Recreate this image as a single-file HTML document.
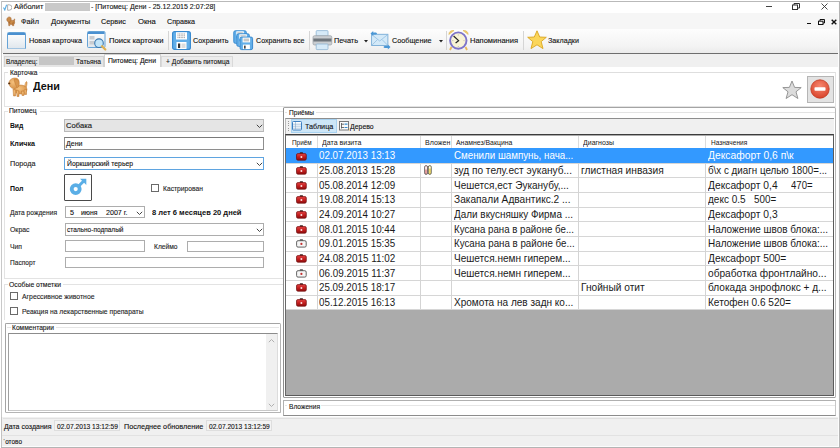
<!DOCTYPE html>
<html><head><meta charset="utf-8">
<style>
*{margin:0;padding:0;box-sizing:border-box}
html,body{width:840px;height:448px;overflow:hidden;background:#f0f0f0;font-family:"Liberation Sans",sans-serif;color:#000;position:relative}
.a{position:absolute}
.t{position:absolute;white-space:pre;transform-origin:0 0}
.s{-webkit-text-stroke:0.12px currentColor}
</style></head><body>
<div class="a" style="left:0px;top:0px;width:840px;height:448px;background:#fff"></div>
<div class="a" style="left:1px;top:1px;width:838px;height:13px;background:#fff"></div>
<div class="a" style="left:1px;top:1px;width:838px;height:1px;background:#b9b9b9"></div>
<div class="a" style="left:1px;top:1px;width:1px;height:446px;background:#c2c2c2"></div>
<div class="a" style="left:839px;top:1px;width:1px;height:447px;background:#b4b4b4"></div>
<div class="a" style="left:1px;top:447px;width:839px;height:1px;background:#b4b4b4"></div>
<svg class="a" style="left:3px;top:3.5px" width="9" height="7" viewBox="0 0 9 7"><path d="M0.5 3.5 L1.8 6 L3.6 0.8" stroke="#5aaee6" stroke-width="1.1" fill="none"/><path d="M4.6 0.8 h1.6 a2.7 2.7 0 0 1 0 5.4 h-1.6 z" stroke="#a8a8a8" stroke-width="0.9" fill="none"/></svg>
<div class="t s" style="left:14.3px;top:3.45px;font-size:7.5px;line-height:7.5px;color:#161616;transform:scaleX(0.9932);">Айболит</div>
<div class="a" style="left:45px;top:3px;width:45px;height:8px;background:#c9c9c9"></div>
<div class="t s" style="left:90.7px;top:3.45px;font-size:7.5px;line-height:7.5px;color:#161616;transform:scaleX(0.9378);">- [Питомец: Дени - 25.12.2015 2:07:28]</div>
<div class="a" style="left:765.5px;top:6px;width:6.5px;height:1px;background:#444"></div>
<svg class="a" style="left:792px;top:3px" width="8" height="7" viewBox="0 0 8 7"><rect x="0.5" y="2" width="5" height="4.5" fill="none" stroke="#333" stroke-width="1"/><path d="M2 2 V0.5 H7.5 V5 H6" fill="none" stroke="#333" stroke-width="1"/></svg>
<svg class="a" style="left:821px;top:3px" width="7" height="7" viewBox="0 0 7 7"><path d="M0.5 0.5 L6.5 6.5 M6.5 0.5 L0.5 6.5" stroke="#333" stroke-width="0.9"/></svg>
<div class="a" style="left:2px;top:13.4px;width:837px;height:15.5px;background:#f6f6f6"></div>
<svg class="a" style="left:4.5px;top:15.5px" width="11" height="11" viewBox="0 0 11 11"><g transform="scale(0.44)"><g fill="#c98a48" stroke="#9a5a25" stroke-width="1"><path d="M19.5 12 C20 9 20.5 7 21.5 6.5 C22.5 7 22 10 21 13 Z"/><ellipse cx="15.5" cy="14.5" rx="6.5" ry="5"/><path d="M8 14 L8.5 22 L11 22 L11 15 Z"/><path d="M16.5 16 L17 22 L20 22 L20.5 15 Z"/><path d="M4 8 C4 5 7 2 10 2 C13 2 14.5 5 14 8 C13.5 12 11 14 8 13.5 C6 13 4 11 4 8 Z"/></g></g></svg>
<div class="t s" style="left:21.4px;top:17.65px;font-size:7.5px;line-height:7.5px;color:#111;transform:scaleX(0.9700);">Файл</div>
<div class="t s" style="left:50.7px;top:17.65px;font-size:7.5px;line-height:7.5px;color:#111;transform:scaleX(1.0162);">Документы</div>
<div class="t s" style="left:101.4px;top:17.65px;font-size:7.5px;line-height:7.5px;color:#111;transform:scaleX(0.9655);">Сервис</div>
<div class="t s" style="left:137.6px;top:17.65px;font-size:7.5px;line-height:7.5px;color:#111;transform:scaleX(1.0265);">Окна</div>
<div class="t s" style="left:166.7px;top:17.65px;font-size:7.5px;line-height:7.5px;color:#111;transform:scaleX(0.9551);">Справка</div>
<div class="a" style="left:807px;top:22.5px;width:4px;height:1.5px;background:#111"></div>
<svg class="a" style="left:818px;top:18.5px" width="7" height="6" viewBox="0 0 7 6"><rect x="0.5" y="2.2" width="4.5" height="3.3" fill="none" stroke="#111" stroke-width="1"/><path d="M2 2 V0.5 H6.5 V4 H5" fill="none" stroke="#111" stroke-width="1"/></svg>
<svg class="a" style="left:831px;top:19px" width="6" height="6" viewBox="0 0 6 6"><path d="M0.7 0.7 L5.3 5.3 M5.3 0.7 L0.7 5.3" stroke="#111" stroke-width="1.4"/></svg>
<div class="a" style="left:2px;top:28.9px;width:837px;height:24.3px;background:linear-gradient(#fdfdfd,#f4f4f4 70%,#ebebeb)"></div>
<div class="a" style="left:3px;top:53px;width:836px;height:1.2px;background:#6e6e6e"></div>
<svg class="a" style="left:7px;top:31.5px" width="19" height="17.5" viewBox="0 0 19 17.5"><defs><linearGradient id="g1" x1="0" y1="0" x2="0" y2="1"><stop offset="0" stop-color="#ffffff"/><stop offset="1" stop-color="#dfe6ec"/></linearGradient></defs><rect x="0.5" y="0.5" width="18" height="16.5" rx="1" fill="url(#g1)" stroke="#66a3d6" stroke-width="1"/><rect x="1" y="1" width="17" height="2" fill="#4a90d0"/></svg>
<div class="t s" style="left:29px;top:36.95px;font-size:7.5px;line-height:7.5px;color:#111;transform:scaleX(0.9758);">Новая карточка</div>
<svg class="a" style="left:87px;top:30.5px" width="19.5" height="20" viewBox="0 0 19.5 20"><defs><linearGradient id="g2" x1="0" y1="0" x2="0" y2="1"><stop offset="0" stop-color="#ffffff"/><stop offset="1" stop-color="#dfe6ec"/></linearGradient></defs><rect x="0.5" y="0.5" width="17.5" height="16" rx="1" fill="url(#g2)" stroke="#66a3d6" stroke-width="1"/><rect x="1" y="1" width="16.5" height="2" fill="#4a90d0"/><rect x="2.5" y="5" width="5" height="3.5" fill="#c9ccd0"/><rect x="2.5" y="10" width="5" height="3.5" fill="#c9ccd0"/><circle cx="12" cy="12.2" r="4.3" fill="#c2e4f8" stroke="#3a78b0" stroke-width="1.1"/><path d="M15 15.2 L18.3 18.5" stroke="#e0b050" stroke-width="2.2" stroke-linecap="round"/></svg>
<div class="t s" style="left:108.5px;top:36.95px;font-size:7.5px;line-height:7.5px;color:#111;transform:scaleX(1.0238);">Поиск карточки</div>
<div class="a" style="left:167.5px;top:31px;width:1px;height:19px;background:#d5d5d5"></div>
<svg class="a" style="left:172px;top:31px" width="19" height="19" viewBox="0 0 19 19"><rect x="0.6" y="0.6" width="17.8" height="17.8" rx="2" fill="#62aee8" stroke="#3a8bd0" stroke-width="1.2"/><rect x="4" y="1.2" width="11" height="7.3" fill="#fff"/><path d="M5.5 3h8M5.5 4.8h8M5.5 6.6h8" stroke="#555" stroke-width="0.6" stroke-dasharray="1 0.6"/><rect x="4.5" y="11" width="10" height="7" fill="#fff"/><rect x="6" y="12.5" width="2.2" height="4.5" fill="#333"/><rect x="9.5" y="12.5" width="4" height="4.5" fill="#ddd"/></svg>
<div class="t s" style="left:193px;top:36.95px;font-size:7.5px;line-height:7.5px;color:#111;transform:scaleX(0.9549);">Сохранить</div>
<svg class="a" style="left:233px;top:30px" width="21" height="21" viewBox="0 0 21 21"><g transform="translate(0.3 0.3)"><rect x="0.5" y="0.5" width="12.5" height="12.5" rx="1.5" fill="#62aee8" stroke="#3a8bd0" stroke-width="1"/><rect x="3" y="1" width="7.5" height="4.8" fill="#fff"/><path d="M4 2.6h5.5M4 4.2h5.5" stroke="#666" stroke-width="0.5"/><rect x="3.3" y="8" width="7" height="4.5" fill="#fff"/><rect x="4.5" y="9" width="1.5" height="3" fill="#333"/></g><g transform="translate(3.3 3.3)"><rect x="0.5" y="0.5" width="12.5" height="12.5" rx="1.5" fill="#62aee8" stroke="#3a8bd0" stroke-width="1"/><rect x="3" y="1" width="7.5" height="4.8" fill="#fff"/><path d="M4 2.6h5.5M4 4.2h5.5" stroke="#666" stroke-width="0.5"/><rect x="3.3" y="8" width="7" height="4.5" fill="#fff"/><rect x="4.5" y="9" width="1.5" height="3" fill="#333"/></g><g transform="translate(6.6 6.6)"><rect x="0.5" y="0.5" width="12.5" height="12.5" rx="1.5" fill="#62aee8" stroke="#3a8bd0" stroke-width="1"/><rect x="3" y="1" width="7.5" height="4.8" fill="#fff"/><path d="M4 2.6h5.5M4 4.2h5.5" stroke="#666" stroke-width="0.5"/><rect x="3.3" y="8" width="7" height="4.5" fill="#fff"/><rect x="4.5" y="9" width="1.5" height="3" fill="#333"/></g></svg>
<div class="t s" style="left:255.5px;top:36.95px;font-size:7.5px;line-height:7.5px;color:#111;transform:scaleX(0.9475);">Сохранить все</div>
<div class="a" style="left:308.8px;top:31px;width:1px;height:19px;background:#d5d5d5"></div>
<svg class="a" style="left:312px;top:30px" width="21" height="21" viewBox="0 0 21 21"><rect x="4.2" y="0.6" width="11.8" height="5.5" rx="0.8" fill="#d6eaf8" stroke="#8fb5d3" stroke-width="0.8"/><rect x="1" y="5.7" width="18.8" height="9.3" rx="1.5" fill="#c9cdd1" stroke="#9a9fa5" stroke-width="0.7"/><rect x="1.4" y="8.5" width="18" height="3" fill="#6f767d"/><rect x="4.2" y="14" width="11.8" height="5.6" rx="0.8" fill="#d6eaf8" stroke="#8fb5d3" stroke-width="0.8"/></svg>
<div class="t s" style="left:334px;top:36.95px;font-size:7.5px;line-height:7.5px;color:#111;transform:scaleX(0.9765);">Печать</div>
<svg class="a" style="left:363.5px;top:39.5px" width="4" height="3" viewBox="0 0 4 3"><path d="M0 0 H4 L2 2.5 Z" fill="#222"/></svg>
<svg class="a" style="left:370px;top:29.5px" width="21" height="21" viewBox="0 0 21 21"><rect x="1.6" y="4.3" width="16.3" height="11.2" fill="#d3e9f8" stroke="#78acd6" stroke-width="0.9"/><path d="M1.8 4.6 L9.7 11 L17.7 4.6 M1.8 15.3 L7.5 9.5 M17.7 15.3 L12 9.5" stroke="#8bb9de" fill="none" stroke-width="0.7"/><path d="M0.5 3.5 L3.2 1 V2.5 H6 L7.2 3.5 L6 4.5 H3.2 V6 Z" fill="#4a97d6"/><path d="M20.5 17 L17.8 14.5 V16 H14.5 L13.3 17 L14.5 18 H17.8 V19.5 Z" fill="#4a97d6"/></svg>
<div class="t s" style="left:392px;top:36.95px;font-size:7.5px;line-height:7.5px;color:#111;transform:scaleX(0.9675);">Сообщение</div>
<svg class="a" style="left:438.5px;top:39.5px" width="4" height="3" viewBox="0 0 4 3"><path d="M0 0 H4 L2 2.5 Z" fill="#222"/></svg>
<div class="a" style="left:445.5px;top:31px;width:1px;height:19px;background:#d5d5d5"></div>
<svg class="a" style="left:448px;top:29.5px" width="21" height="21" viewBox="0 0 21 21"><path d="M0.8 4.5 A4 4 0 0 1 6 0.6 Z" fill="#f2cf6e" stroke="#d9ab3e" stroke-width="0.5"/><path d="M20.2 4.5 A4 4 0 0 0 15 0.6 Z" fill="#f2cf6e" stroke="#d9ab3e" stroke-width="0.5"/><path d="M3.5 17 L2 20 M17.5 17 L19 20" stroke="#e8b85a" stroke-width="1.8"/><circle cx="10.3" cy="10.6" r="8.2" fill="#f8f3d6" stroke="#7d74c9" stroke-width="1.9"/><path d="M10.3 4.5v1M10.3 16v1M4.3 10.6h1M15.5 10.6h1" stroke="#999" stroke-width="0.6"/><path d="M5.6 6 L10.6 10.6 L7.6 13" stroke="#222" stroke-width="1.2" fill="none"/></svg>
<div class="t s" style="left:470px;top:36.95px;font-size:7.5px;line-height:7.5px;color:#111;transform:scaleX(1.0026);">Напоминания</div>
<div class="a" style="left:523.2px;top:31px;width:1px;height:19px;background:#d5d5d5"></div>
<svg class="a" style="left:526.5px;top:30px" width="20" height="20" viewBox="0 0 20 20"><path d="M10 0.8 L12.7 7 L19.3 7.3 L14.2 11.6 L16 18.6 L10 14.8 L4 18.6 L5.8 11.6 L0.7 7.3 L7.3 7 Z" fill="#fbd65a" stroke="#d9a520" stroke-width="0.9" stroke-linejoin="round"/></svg>
<div class="t s" style="left:548px;top:36.95px;font-size:7.5px;line-height:7.5px;color:#111;transform:scaleX(0.9548);">Закладки</div>
<div class="a" style="left:3px;top:54px;width:836px;height:13px;background:#f0f0f0"></div>
<div class="a" style="left:3px;top:66.5px;width:836px;height:1px;background:#dadada"></div>
<div class="a" style="left:4px;top:56px;width:99.5px;height:11px;background:#e6e6e6;border:1px solid #d2d2d2;border-bottom:none"></div>
<div class="t s" style="left:6px;top:57.85px;font-size:7.5px;line-height:7.5px;color:#161616;transform:scaleX(0.8564);">Владелец:</div>
<div class="a" style="left:38.6px;top:57.2px;width:35.4px;height:7.4px;background:#c6c6c6"></div>
<div class="t s" style="left:75.5px;top:57.85px;font-size:7.5px;line-height:7.5px;color:#161616;transform:scaleX(0.8939);">Татьяна</div>
<div class="a" style="left:104px;top:54px;width:57px;height:14px;background:#fff;border:1px solid #d2d2d2;border-bottom:none"></div>
<div class="a" style="left:105px;top:66px;width:55px;height:2px;background:#fff"></div>
<div class="t s" style="left:108px;top:57.25px;font-size:7.5px;line-height:7.5px;color:#111;transform:scaleX(0.9146);">Питомец: Дени</div>
<div class="a" style="left:161px;top:56px;width:71.5px;height:11px;background:#ececec;border:1px solid #d9d9d9;border-bottom:none"></div>
<div class="t s" style="left:165.5px;top:57.85px;font-size:7.5px;line-height:7.5px;color:#161616;transform:scaleX(0.8932);">+ Добавить питомца</div>
<div class="a" style="left:1.5px;top:67px;width:837px;height:350px;background:#fff"></div>
<div class="a" style="left:1.3px;top:54px;width:1px;height:363px;background:#c8c8c8"></div>
<div class="a" style="left:3.7px;top:71.5px;width:832.6px;height:35px;border:1px solid #e3e3e3;border-top-color:#dedede"></div>
<div class="a" style="left:8px;top:68px;width:31px;height:6px;background:#fff"></div>
<div class="t s" style="left:9.5px;top:69.15px;font-size:7.5px;line-height:7.5px;color:#161616;transform:scaleX(0.8748);">Карточка</div>
<svg class="a" style="left:5px;top:75px" width="25" height="25" viewBox="0 0 25 25"><defs><radialGradient id="dg" cx="0.4" cy="0.4" r="0.7"><stop offset="0" stop-color="#f5c17e"/><stop offset="1" stop-color="#d48f45"/></radialGradient></defs><g fill="url(#dg)" stroke="#c07a35" stroke-width="0.5"><path d="M19.5 12 C20 9 20.5 7 21.5 6.5 C22.5 7 22 10 21 13 Z"/><ellipse cx="15.5" cy="14.5" rx="6.5" ry="4.5"/><path d="M8 14 L8.5 21 L10.5 21 L11 15 Z"/><path d="M11.5 15 L12 21.5 L14 21.5 L14 16 Z"/><path d="M16.5 16 L17 20.5 L19 20.5 L19.5 16 Z"/><path d="M19 15 L19.5 19.5 L21.5 19.5 L21.5 14 Z"/><path d="M4 8 C4 5 7 3 10 3 C13 3 14.5 5 14 8 C13.5 12 11 14 8 13.5 C6 13 4 11 4 8 Z"/><path d="M9 4.5 C11.5 3.5 13.5 5 14 7 C14.5 10 13.5 12.5 12.5 12.5 C11 11.5 10 8 9 4.5 Z" fill="#d9974f"/></g><ellipse cx="4.2" cy="8.4" rx="1.1" ry="0.9" fill="#5a3010"/></svg>
<div class="t" style="left:33px;top:80.51px;font-size:10.5px;line-height:10.5px;color:#111;font-weight:bold;transform:scaleX(1.0286);">Дени</div>
<svg class="a" style="left:782px;top:79.5px" width="20" height="20" viewBox="0 0 20 20"><path d="M10 1 L12.6 7.4 L19.2 7.6 L14 11.8 L15.9 18.5 L10 14.7 L4.1 18.5 L6 11.8 L0.8 7.6 L7.4 7.4 Z" fill="#dcdcdc" stroke="#8c8c8c" stroke-width="0.9" stroke-linejoin="round"/></svg>
<div class="a" style="left:807px;top:76px;width:27px;height:27px;background:#e3e3e3;border:1px solid #b5b5b5"></div>
<svg class="a" style="left:810.3px;top:78.6px" width="20" height="20" viewBox="0 0 20 20"><defs><radialGradient id="rg" cx="0.5" cy="0.35" r="0.65"><stop offset="0" stop-color="#f7876f"/><stop offset="1" stop-color="#d8442c"/></radialGradient></defs><circle cx="10" cy="10" r="9.2" fill="url(#rg)" stroke="#c23a22" stroke-width="0.8"/><rect x="4.5" y="8.3" width="11" height="3.4" rx="0.8" fill="#fff"/></svg>
<div class="a" style="left:3.7px;top:111px;width:279px;height:168px;border:1px solid #e3e3e3;border-right:none"></div>
<div class="a" style="left:8px;top:108px;width:32px;height:6px;background:#fff"></div>
<div class="t s" style="left:9.4px;top:107.25px;font-size:7.5px;line-height:7.5px;color:#161616;transform:scaleX(0.8980);">Питомец</div>
<div class="t" style="left:10.2px;top:121.95px;font-size:7.5px;line-height:7.5px;color:#111;font-weight:bold;transform:scaleX(0.8988);">Вид</div>
<div class="a" style="left:64px;top:118.7px;width:200px;height:13.3px;background:#e5e5e5;border:1px solid #b9b9b9"></div>
<div class="t s" style="left:66.3px;top:121.95px;font-size:7.5px;line-height:7.5px;color:#161616;transform:scaleX(1.0196);">Собака</div>
<svg class="a" style="left:255.5px;top:123.5px" width="7" height="5" viewBox="0 0 7 5"><path d="M0.8 0.8 L3.5 3.5 L6.2 0.8" stroke="#444" stroke-width="1" fill="none"/></svg>
<div class="t" style="left:10.2px;top:140.15px;font-size:7.5px;line-height:7.5px;color:#111;font-weight:bold;transform:scaleX(0.9529);">Кличка</div>
<div class="a" style="left:64px;top:137px;width:200px;height:13px;background:#fff;border:1px solid #8e8e8e;border-top-color:#7a7a7a"></div>
<div class="t s" style="left:66.3px;top:140.15px;font-size:7.5px;line-height:7.5px;color:#161616;transform:scaleX(0.9378);">Дени</div>
<div class="t s" style="left:10px;top:159.95px;font-size:7.5px;line-height:7.5px;color:#1e1e1e;transform:scaleX(0.9697);">Порода</div>
<div class="a" style="left:64px;top:157.3px;width:200px;height:12.5px;background:#fff;border:1px solid #5fa4e0"></div>
<div class="t s" style="left:66.5px;top:159.95px;font-size:7.5px;line-height:7.5px;color:#111;transform:scaleX(0.9060);">Йоркширский терьер</div>
<svg class="a" style="left:255.5px;top:162px" width="7" height="5" viewBox="0 0 7 5"><path d="M0.8 0.8 L3.5 3.5 L6.2 0.8" stroke="#444" stroke-width="1" fill="none"/></svg>
<div class="t" style="left:10.3px;top:184.65px;font-size:7.5px;line-height:7.5px;color:#111;font-weight:bold;transform:scaleX(0.9270);">Пол</div>
<div class="a" style="left:64.4px;top:174.3px;width:27.3px;height:26.6px;background:#fff;border:1px solid #4a4a4a;border-radius:1px"></div>
<svg class="a" style="left:68px;top:177px" width="21" height="21" viewBox="0 0 21 21"><circle cx="7.7" cy="12.1" r="4" fill="none" stroke="#5aaee6" stroke-width="3.8"/><path d="M10.8 9 L15.5 4.3" stroke="#5aaee6" stroke-width="3"/><path d="M12 1.8 H18.3 V8.1 Z" fill="#5aaee6"/></svg>
<div class="a" style="left:151px;top:184.1px;width:8.2px;height:8px;background:#fff;border:1px solid #6a6a6a"></div>
<div class="t s" style="left:163px;top:184.65px;font-size:7.5px;line-height:7.5px;color:#1e1e1e;transform:scaleX(0.8957);">Кастрирован</div>
<div class="t s" style="left:10px;top:208.95px;font-size:7.5px;line-height:7.5px;color:#1e1e1e;transform:scaleX(0.8881);">Дата рождения</div>
<div class="a" style="left:64.5px;top:205.8px;width:80px;height:12.6px;background:#fff;border:1px solid #adadad"></div>
<div class="t s" style="left:69.5px;top:208.95px;font-size:7.5px;line-height:7.5px;color:#111;transform:scaleX(0.9588);">5</div>
<div class="t s" style="left:81px;top:208.95px;font-size:7.5px;line-height:7.5px;color:#111;transform:scaleX(0.9151);">июня</div>
<div class="t s" style="left:105.5px;top:208.95px;font-size:7.5px;line-height:7.5px;color:#111;transform:scaleX(0.9477);">2007 г.</div>
<svg class="a" style="left:135.5px;top:210.5px" width="7" height="5" viewBox="0 0 7 5"><path d="M0.8 0.8 L3.5 3.5 L6.2 0.8" stroke="#444" stroke-width="1" fill="none"/></svg>
<div class="t" style="left:151.5px;top:208.95px;font-size:7.5px;line-height:7.5px;color:#111;font-weight:bold;transform:scaleX(1.0039);">8 лет 6 месяцев 20 дней</div>
<div class="t s" style="left:10px;top:226.15px;font-size:7.5px;line-height:7.5px;color:#1e1e1e;transform:scaleX(0.9190);">Окрас</div>
<div class="a" style="left:64.5px;top:223px;width:199px;height:13px;background:#fff;border:1px solid #adadad"></div>
<div class="t s" style="left:66.5px;top:225.95px;font-size:7.5px;line-height:7.5px;color:#111;transform:scaleX(0.8692);">стально-подпалый</div>
<svg class="a" style="left:255.5px;top:228px" width="7" height="5" viewBox="0 0 7 5"><path d="M0.8 0.8 L3.5 3.5 L6.2 0.8" stroke="#444" stroke-width="1" fill="none"/></svg>
<div class="t s" style="left:10px;top:243.15px;font-size:7.5px;line-height:7.5px;color:#1e1e1e;transform:scaleX(0.9057);">Чип</div>
<div class="a" style="left:64.5px;top:240.3px;width:80px;height:11.8px;background:#fff;border:1px solid #adadad"></div>
<div class="t s" style="left:154px;top:243.15px;font-size:7.5px;line-height:7.5px;color:#1e1e1e;transform:scaleX(0.8889);">Клеймо</div>
<div class="a" style="left:187px;top:240.5px;width:76.7px;height:11.6px;background:#fff;border:1px solid #adadad"></div>
<div class="t s" style="left:10px;top:258.95px;font-size:7.5px;line-height:7.5px;color:#1e1e1e;transform:scaleX(0.8793);">Паспорт</div>
<div class="a" style="left:64.5px;top:256.5px;width:199.2px;height:11.6px;background:#fff;border:1px solid #adadad"></div>
<div class="a" style="left:3.7px;top:284px;width:279px;height:36px;border:1px solid #e3e3e3;border-right:none;border-bottom:none"></div>
<div class="a" style="left:8px;top:281px;width:55px;height:6px;background:#fff"></div>
<div class="t s" style="left:9px;top:280.95px;font-size:7.5px;line-height:7.5px;color:#161616;transform:scaleX(0.9088);">Особые отметки</div>
<div class="a" style="left:9.7px;top:292.3px;width:8.2px;height:8px;background:#fff;border:1px solid #6a6a6a"></div>
<div class="t s" style="left:21.5px;top:292.95px;font-size:7.5px;line-height:7.5px;color:#1e1e1e;transform:scaleX(0.9136);">Агрессивное животное</div>
<div class="a" style="left:9.7px;top:307.2px;width:8.2px;height:8px;background:#fff;border:1px solid #6a6a6a"></div>
<div class="t s" style="left:21.5px;top:307.95px;font-size:7.5px;line-height:7.5px;color:#1e1e1e;transform:scaleX(0.9035);">Реакция на лекарственные препараты</div>
<div class="a" style="left:5.4px;top:322.7px;width:275.2px;height:90px;border:1px solid #a4a4a4;border-right-color:#b4b4b4;border-bottom-color:#b4b4b4;border-radius:1.5px"></div>
<div class="a" style="left:7px;top:327px;width:272px;height:1px;background:#e6e6e6"></div>
<div class="a" style="left:11px;top:324px;width:45px;height:6px;background:#fff"></div>
<div class="t s" style="left:12px;top:323.85px;font-size:7.5px;line-height:7.5px;color:#161616;transform:scaleX(0.8889);">Комментарии</div>
<div class="a" style="left:8.3px;top:333.2px;width:270px;height:78px;background:#fff;border:1px solid #8c8c8c;border-left-color:#a0a0a0;border-right-color:#dcdcdc;border-bottom-color:#c8c8c8"></div>
<div class="a" style="left:266px;top:334px;width:11px;height:76px;background:#f0f0f0"></div>
<svg class="a" style="left:268px;top:338px" width="7" height="5" viewBox="0 0 7 5"><path d="M0.8 4.2 L3.5 1.5 L6.2 4.2" stroke="#b0b0b0" stroke-width="1" fill="none"/></svg>
<svg class="a" style="left:268px;top:403px" width="7" height="5" viewBox="0 0 7 5"><path d="M0.8 0.8 L3.5 3.5 L6.2 0.8" stroke="#b0b0b0" stroke-width="1" fill="none"/></svg>
<div class="a" style="left:283px;top:107.4px;width:553px;height:290.6px;border:1px solid #a4a4a4;border-left-color:#8c8c8c;border-right-color:#b8b8b8;border-bottom-color:#a0a0a0;border-radius:1.5px"></div>
<div class="a" style="left:284.5px;top:111.5px;width:550px;height:286px;border-top:1px solid #e3e3e3"></div>
<div class="a" style="left:287px;top:108.5px;width:29px;height:6px;background:#fff"></div>
<div class="t s" style="left:289px;top:109.15px;font-size:7.5px;line-height:7.5px;color:#161616;transform:scaleX(0.8777);">Приёмы</div>
<div class="a" style="left:285px;top:117.8px;width:548.5px;height:16.7px;background:#f0f0f0;border-left:1px solid #b8b8b8;border-top:1px solid #8e8e8e"></div>
<div class="a" style="left:288.3px;top:120.5px;width:1px;height:1px;background:#9a9a9a"></div>
<div class="a" style="left:288.3px;top:122.9px;width:1px;height:1px;background:#9a9a9a"></div>
<div class="a" style="left:288.3px;top:125.3px;width:1px;height:1px;background:#9a9a9a"></div>
<div class="a" style="left:288.3px;top:127.7px;width:1px;height:1px;background:#9a9a9a"></div>
<div class="a" style="left:288.3px;top:130.1px;width:1px;height:1px;background:#9a9a9a"></div>
<div class="a" style="left:291px;top:119px;width:46.2px;height:13.8px;background:#cde6f7;border:1px solid #a8d2f0"></div>
<svg class="a" style="left:292.3px;top:121.3px" width="10" height="9.5" viewBox="0 0 10 9.5"><rect x="0.5" y="0.5" width="9" height="8.5" rx="0.8" fill="#fbfdff" stroke="#3d7fc0" stroke-width="1"/><path d="M1 3.2h8M1 5.2h8M1 7.2h8M3.5 1v7.5" stroke="#7fa6c8" stroke-width="0.6"/></svg>
<div class="t s" style="left:304.7px;top:122.73px;font-size:8px;line-height:8px;color:#111;transform:scaleX(0.9020);">Таблица</div>
<svg class="a" style="left:338.5px;top:121.3px" width="10" height="9.5" viewBox="0 0 10 9.5"><rect x="0.5" y="0.5" width="9" height="8.5" fill="#fbfbfb" stroke="#6c6c6c" stroke-width="0.9"/><path d="M2.5 2v5.5M2.5 3.2h2.5M2.5 6.5h2.5" stroke="#333" stroke-width="0.7"/><path d="M5.5 3.2h3M5.5 6.5h3" stroke="#3a8fd0" stroke-width="1.2"/></svg>
<div class="t s" style="left:350px;top:122.73px;font-size:8px;line-height:8px;color:#111;transform:scaleX(0.8658);">Дерево</div>
<div class="a" style="left:285px;top:134.2px;width:548.5px;height:261.8px;background:#ababab;border:1px solid #5a5a5a;border-top:1.6px solid #3c3c3c;border-left-color:#6a6a6a"></div>
<div class="a" style="left:286px;top:135.8px;width:546.6px;height:12.4px;background:#fff"></div>
<div class="a" style="left:316.6px;top:135.8px;width:1px;height:12.4px;background:#dcdcdc"></div>
<div class="a" style="left:420px;top:135.8px;width:1px;height:12.4px;background:#dcdcdc"></div>
<div class="a" style="left:450.9px;top:135.8px;width:1px;height:12.4px;background:#dcdcdc"></div>
<div class="a" style="left:578px;top:135.8px;width:1px;height:12.4px;background:#dcdcdc"></div>
<div class="a" style="left:705.2px;top:135.8px;width:1px;height:12.4px;background:#dcdcdc"></div>
<div class="t" style="left:291.9px;top:138.74px;font-size:7.4px;line-height:7.4px;color:#161616;transform:scaleX(0.8659);/*nostroke*/">Приём</div>
<div class="t" style="left:321.6px;top:138.74px;font-size:7.4px;line-height:7.4px;color:#161616;transform:scaleX(0.9491);/*nostroke*/">Дата визита</div>
<div class="t" style="left:424.7px;top:138.74px;font-size:7.4px;line-height:7.4px;color:#161616;transform:scaleX(0.9547);/*nostroke*/">Вложен</div>
<div class="t" style="left:455.7px;top:138.74px;font-size:7.4px;line-height:7.4px;color:#161616;transform:scaleX(0.9322);/*nostroke*/">Анамнез/Вакцина</div>
<div class="t" style="left:583.3px;top:138.74px;font-size:7.4px;line-height:7.4px;color:#161616;transform:scaleX(0.9466);/*nostroke*/">Диагнозы</div>
<div class="t" style="left:710.7px;top:138.74px;font-size:7.4px;line-height:7.4px;color:#161616;transform:scaleX(0.8836);/*nostroke*/">Назначения</div>
<svg width="0" height="0" style="position:absolute"><defs><linearGradient id="mk" x1="0" y1="0" x2="0" y2="1"><stop offset="0" stop-color="#e54545"/><stop offset="0.5" stop-color="#c41e1e"/><stop offset="1" stop-color="#8e0e0e"/></linearGradient></defs></svg>
<div class="a" style="left:286px;top:148.2px;width:546.8px;height:14.64px;background:#3399ff"></div>
<div class="a" style="left:286px;top:162.83999999999997px;width:546.8px;height:14.64px;background:#fff"></div>
<div class="a" style="left:286px;top:177.48px;width:546.8px;height:14.64px;background:#fff"></div>
<div class="a" style="left:286px;top:192.12px;width:546.8px;height:14.64px;background:#fff"></div>
<div class="a" style="left:286px;top:206.76px;width:546.8px;height:14.64px;background:#fff"></div>
<div class="a" style="left:286px;top:221.39999999999998px;width:546.8px;height:14.64px;background:#fff"></div>
<div class="a" style="left:286px;top:236.04px;width:546.8px;height:14.64px;background:#fff"></div>
<div class="a" style="left:286px;top:250.68px;width:546.8px;height:14.64px;background:#fff"></div>
<div class="a" style="left:286px;top:265.32px;width:546.8px;height:14.64px;background:#fff"></div>
<div class="a" style="left:286px;top:279.96px;width:546.8px;height:14.64px;background:#fff"></div>
<div class="a" style="left:286px;top:294.6px;width:546.8px;height:14.64px;background:#fff"></div>
<div class="a" style="left:286px;top:163px;width:546.8px;height:1px;background:#d6d6d6"></div>
<div class="a" style="left:286px;top:177px;width:546.8px;height:1px;background:#d6d6d6"></div>
<div class="a" style="left:316.6px;top:162.83999999999997px;width:1px;height:14.64px;background:#d4d4d4"></div>
<div class="a" style="left:420px;top:162.83999999999997px;width:1px;height:14.64px;background:#d4d4d4"></div>
<div class="a" style="left:450.9px;top:162.83999999999997px;width:1px;height:14.64px;background:#d4d4d4"></div>
<div class="a" style="left:578px;top:162.83999999999997px;width:1px;height:14.64px;background:#d4d4d4"></div>
<div class="a" style="left:705.2px;top:162.83999999999997px;width:1px;height:14.64px;background:#d4d4d4"></div>
<div class="a" style="left:286px;top:192px;width:546.8px;height:1px;background:#d6d6d6"></div>
<div class="a" style="left:316.6px;top:177.48px;width:1px;height:14.64px;background:#d4d4d4"></div>
<div class="a" style="left:420px;top:177.48px;width:1px;height:14.64px;background:#d4d4d4"></div>
<div class="a" style="left:450.9px;top:177.48px;width:1px;height:14.64px;background:#d4d4d4"></div>
<div class="a" style="left:578px;top:177.48px;width:1px;height:14.64px;background:#d4d4d4"></div>
<div class="a" style="left:705.2px;top:177.48px;width:1px;height:14.64px;background:#d4d4d4"></div>
<div class="a" style="left:286px;top:207px;width:546.8px;height:1px;background:#d6d6d6"></div>
<div class="a" style="left:316.6px;top:192.12px;width:1px;height:14.64px;background:#d4d4d4"></div>
<div class="a" style="left:420px;top:192.12px;width:1px;height:14.64px;background:#d4d4d4"></div>
<div class="a" style="left:450.9px;top:192.12px;width:1px;height:14.64px;background:#d4d4d4"></div>
<div class="a" style="left:578px;top:192.12px;width:1px;height:14.64px;background:#d4d4d4"></div>
<div class="a" style="left:705.2px;top:192.12px;width:1px;height:14.64px;background:#d4d4d4"></div>
<div class="a" style="left:286px;top:221px;width:546.8px;height:1px;background:#d6d6d6"></div>
<div class="a" style="left:316.6px;top:206.76px;width:1px;height:14.64px;background:#d4d4d4"></div>
<div class="a" style="left:420px;top:206.76px;width:1px;height:14.64px;background:#d4d4d4"></div>
<div class="a" style="left:450.9px;top:206.76px;width:1px;height:14.64px;background:#d4d4d4"></div>
<div class="a" style="left:578px;top:206.76px;width:1px;height:14.64px;background:#d4d4d4"></div>
<div class="a" style="left:705.2px;top:206.76px;width:1px;height:14.64px;background:#d4d4d4"></div>
<div class="a" style="left:286px;top:236px;width:546.8px;height:1px;background:#d6d6d6"></div>
<div class="a" style="left:316.6px;top:221.39999999999998px;width:1px;height:14.64px;background:#d4d4d4"></div>
<div class="a" style="left:420px;top:221.39999999999998px;width:1px;height:14.64px;background:#d4d4d4"></div>
<div class="a" style="left:450.9px;top:221.39999999999998px;width:1px;height:14.64px;background:#d4d4d4"></div>
<div class="a" style="left:578px;top:221.39999999999998px;width:1px;height:14.64px;background:#d4d4d4"></div>
<div class="a" style="left:705.2px;top:221.39999999999998px;width:1px;height:14.64px;background:#d4d4d4"></div>
<div class="a" style="left:286px;top:251px;width:546.8px;height:1px;background:#d6d6d6"></div>
<div class="a" style="left:316.6px;top:236.04px;width:1px;height:14.64px;background:#d4d4d4"></div>
<div class="a" style="left:420px;top:236.04px;width:1px;height:14.64px;background:#d4d4d4"></div>
<div class="a" style="left:450.9px;top:236.04px;width:1px;height:14.64px;background:#d4d4d4"></div>
<div class="a" style="left:578px;top:236.04px;width:1px;height:14.64px;background:#d4d4d4"></div>
<div class="a" style="left:705.2px;top:236.04px;width:1px;height:14.64px;background:#d4d4d4"></div>
<div class="a" style="left:286px;top:265px;width:546.8px;height:1px;background:#d6d6d6"></div>
<div class="a" style="left:316.6px;top:250.68px;width:1px;height:14.64px;background:#d4d4d4"></div>
<div class="a" style="left:420px;top:250.68px;width:1px;height:14.64px;background:#d4d4d4"></div>
<div class="a" style="left:450.9px;top:250.68px;width:1px;height:14.64px;background:#d4d4d4"></div>
<div class="a" style="left:578px;top:250.68px;width:1px;height:14.64px;background:#d4d4d4"></div>
<div class="a" style="left:705.2px;top:250.68px;width:1px;height:14.64px;background:#d4d4d4"></div>
<div class="a" style="left:286px;top:280px;width:546.8px;height:1px;background:#d6d6d6"></div>
<div class="a" style="left:316.6px;top:265.32px;width:1px;height:14.64px;background:#d4d4d4"></div>
<div class="a" style="left:420px;top:265.32px;width:1px;height:14.64px;background:#d4d4d4"></div>
<div class="a" style="left:450.9px;top:265.32px;width:1px;height:14.64px;background:#d4d4d4"></div>
<div class="a" style="left:578px;top:265.32px;width:1px;height:14.64px;background:#d4d4d4"></div>
<div class="a" style="left:705.2px;top:265.32px;width:1px;height:14.64px;background:#d4d4d4"></div>
<div class="a" style="left:286px;top:295px;width:546.8px;height:1px;background:#d6d6d6"></div>
<div class="a" style="left:316.6px;top:279.96px;width:1px;height:14.64px;background:#d4d4d4"></div>
<div class="a" style="left:420px;top:279.96px;width:1px;height:14.64px;background:#d4d4d4"></div>
<div class="a" style="left:450.9px;top:279.96px;width:1px;height:14.64px;background:#d4d4d4"></div>
<div class="a" style="left:578px;top:279.96px;width:1px;height:14.64px;background:#d4d4d4"></div>
<div class="a" style="left:705.2px;top:279.96px;width:1px;height:14.64px;background:#d4d4d4"></div>
<div class="a" style="left:286px;top:309px;width:546.8px;height:1px;background:#d6d6d6"></div>
<div class="a" style="left:316.6px;top:294.6px;width:1px;height:14.64px;background:#d4d4d4"></div>
<div class="a" style="left:420px;top:294.6px;width:1px;height:14.64px;background:#d4d4d4"></div>
<div class="a" style="left:450.9px;top:294.6px;width:1px;height:14.64px;background:#d4d4d4"></div>
<div class="a" style="left:578px;top:294.6px;width:1px;height:14.64px;background:#d4d4d4"></div>
<div class="a" style="left:705.2px;top:294.6px;width:1px;height:14.64px;background:#d4d4d4"></div>
<svg class="a" style="left:295.8px;top:151.5px" width="11" height="9" viewBox="0 0 11 9"><rect x="3.8" y="0.2" width="3.2" height="2" rx="0.5" fill="#3a2020"/><rect x="0.5" y="1.6" width="9.8" height="6.6" rx="1.4" fill="url(#mk)" stroke="#6e0c0c" stroke-width="0.7"/><circle cx="5.4" cy="4.9" r="1" fill="#fbe0e0"/></svg>
<div class="t" style="left:319.3px;top:150.46px;font-size:10.8px;line-height:10.8px;color:#fff;transform:scaleX(0.9065);">02.07.2013 13:13</div>
<div class="t" style="left:453.7px;top:150.46px;font-size:10.8px;line-height:10.8px;color:#fff;transform:scaleX(0.9049);">Сменили шампунь, нача...</div>
<div class="t" style="left:708.4px;top:150.46px;font-size:10.8px;line-height:10.8px;color:#fff;transform:scaleX(0.9538);">Дексафорт 0,6 п\к</div>
<svg class="a" style="left:295.8px;top:166.14px" width="11" height="9" viewBox="0 0 11 9"><rect x="3.8" y="0.2" width="3.2" height="2" rx="0.5" fill="#3a2020"/><rect x="0.5" y="1.6" width="9.8" height="6.6" rx="1.4" fill="url(#mk)" stroke="#6e0c0c" stroke-width="0.7"/><circle cx="5.4" cy="4.9" r="1" fill="#fbe0e0"/></svg>
<div class="t" style="left:319.3px;top:165.10px;font-size:10.8px;line-height:10.8px;color:#1a1a1a;transform:scaleX(0.9065);">25.08.2013 15:28</div>
<svg class="a" style="left:423.5px;top:165.14px" width="8" height="10" viewBox="0 0 8 10"><rect x="0.6" y="0.6" width="3" height="8.8" rx="1.5" fill="#e8a0a0" stroke="#555" stroke-width="0.8"/><rect x="1.3" y="1.5" width="1.5" height="3" fill="#fff"/><rect x="4.3" y="0.6" width="3" height="8.8" rx="1.5" fill="#f0dc6a" stroke="#555" stroke-width="0.8"/><rect x="5" y="1.5" width="1.5" height="2" fill="#fff"/></svg>
<div class="t" style="left:453.7px;top:165.10px;font-size:10.8px;line-height:10.8px;color:#1a1a1a;transform:scaleX(0.9365);">зуд по телу.ест эукануб...</div>
<div class="t" style="left:581.3px;top:165.10px;font-size:10.8px;line-height:10.8px;color:#1a1a1a;transform:scaleX(0.9450);">глистная инвазия</div>
<div class="t" style="left:708.4px;top:165.10px;font-size:10.8px;line-height:10.8px;color:#1a1a1a;transform:scaleX(0.9072);">б\х с диагн целью 1800=...</div>
<svg class="a" style="left:295.8px;top:180.78px" width="11" height="9" viewBox="0 0 11 9"><rect x="3.8" y="0.2" width="3.2" height="2" rx="0.5" fill="#3a2020"/><rect x="0.5" y="1.6" width="9.8" height="6.6" rx="1.4" fill="url(#mk)" stroke="#6e0c0c" stroke-width="0.7"/><circle cx="5.4" cy="4.9" r="1" fill="#fbe0e0"/></svg>
<div class="t" style="left:319.3px;top:179.74px;font-size:10.8px;line-height:10.8px;color:#1a1a1a;transform:scaleX(0.9065);">05.08.2014 12:09</div>
<div class="t" style="left:453.7px;top:179.74px;font-size:10.8px;line-height:10.8px;color:#1a1a1a;transform:scaleX(0.9281);">Чешется,ест Эуканубу,...</div>
<div class="t" style="left:708.4px;top:179.74px;font-size:10.8px;line-height:10.8px;color:#1a1a1a;transform:scaleX(0.9510);">Дексафорт 0,4</div>
<div class="t" style="left:790.8px;top:179.74px;font-size:10.8px;line-height:10.8px;color:#1a1a1a;transform:scaleX(0.8879);">470=</div>
<svg class="a" style="left:295.8px;top:195.42000000000002px" width="11" height="9" viewBox="0 0 11 9"><rect x="3.8" y="0.2" width="3.2" height="2" rx="0.5" fill="#3a2020"/><rect x="0.5" y="1.6" width="9.8" height="6.6" rx="1.4" fill="url(#mk)" stroke="#6e0c0c" stroke-width="0.7"/><circle cx="5.4" cy="4.9" r="1" fill="#fbe0e0"/></svg>
<div class="t" style="left:319.3px;top:194.38px;font-size:10.8px;line-height:10.8px;color:#1a1a1a;transform:scaleX(0.9065);">19.08.2014 15:13</div>
<div class="t" style="left:453.7px;top:194.38px;font-size:10.8px;line-height:10.8px;color:#1a1a1a;transform:scaleX(0.9396);">Закапали Адвантикс.2 ...</div>
<div class="t" style="left:708.4px;top:194.38px;font-size:10.8px;line-height:10.8px;color:#1a1a1a;transform:scaleX(0.9270);">декс 0.5</div>
<div class="t" style="left:753.8px;top:194.38px;font-size:10.8px;line-height:10.8px;color:#1a1a1a;transform:scaleX(0.9125);">500=</div>
<svg class="a" style="left:295.8px;top:210.06px" width="11" height="9" viewBox="0 0 11 9"><rect x="3.8" y="0.2" width="3.2" height="2" rx="0.5" fill="#3a2020"/><rect x="0.5" y="1.6" width="9.8" height="6.6" rx="1.4" fill="url(#mk)" stroke="#6e0c0c" stroke-width="0.7"/><circle cx="5.4" cy="4.9" r="1" fill="#fbe0e0"/></svg>
<div class="t" style="left:319.3px;top:209.02px;font-size:10.8px;line-height:10.8px;color:#1a1a1a;transform:scaleX(0.9065);">24.09.2014 10:27</div>
<div class="t" style="left:453.7px;top:209.02px;font-size:10.8px;line-height:10.8px;color:#1a1a1a;transform:scaleX(0.9204);">Дали вкусняшку Фирма ...</div>
<div class="t" style="left:708.4px;top:209.02px;font-size:10.8px;line-height:10.8px;color:#1a1a1a;transform:scaleX(0.9510);">Дексафорт 0,3</div>
<svg class="a" style="left:295.8px;top:224.7px" width="11" height="9" viewBox="0 0 11 9"><rect x="3.8" y="0.2" width="3.2" height="2" rx="0.5" fill="#3a2020"/><rect x="0.5" y="1.6" width="9.8" height="6.6" rx="1.4" fill="url(#mk)" stroke="#6e0c0c" stroke-width="0.7"/><circle cx="5.4" cy="4.9" r="1" fill="#fbe0e0"/></svg>
<div class="t" style="left:319.3px;top:223.66px;font-size:10.8px;line-height:10.8px;color:#1a1a1a;transform:scaleX(0.9065);">08.01.2015 10:44</div>
<div class="t" style="left:453.7px;top:223.66px;font-size:10.8px;line-height:10.8px;color:#1a1a1a;transform:scaleX(0.8973);">Кусана рана в районе бе...</div>
<div class="t" style="left:708.4px;top:223.66px;font-size:10.8px;line-height:10.8px;color:#1a1a1a;transform:scaleX(0.9206);">Наложение швов блока:...</div>
<svg class="a" style="left:295.8px;top:239.34px" width="11" height="9" viewBox="0 0 11 9"><rect x="3.8" y="0.2" width="3.2" height="2" rx="0.5" fill="#555"/><rect x="0.6" y="1.7" width="9.6" height="6.4" rx="1.4" fill="#f6f6f6" stroke="#555" stroke-width="0.9"/><circle cx="5.4" cy="4.9" r="1.1" fill="#c43030"/></svg>
<div class="t" style="left:319.3px;top:238.30px;font-size:10.8px;line-height:10.8px;color:#1a1a1a;transform:scaleX(0.9065);">09.01.2015 15:35</div>
<div class="t" style="left:453.7px;top:238.30px;font-size:10.8px;line-height:10.8px;color:#1a1a1a;transform:scaleX(0.9018);">Кусана рана в районе бе...</div>
<div class="t" style="left:708.4px;top:238.30px;font-size:10.8px;line-height:10.8px;color:#1a1a1a;transform:scaleX(0.9206);">Наложение швов блока:...</div>
<svg class="a" style="left:295.8px;top:253.98000000000002px" width="11" height="9" viewBox="0 0 11 9"><rect x="3.8" y="0.2" width="3.2" height="2" rx="0.5" fill="#3a2020"/><rect x="0.5" y="1.6" width="9.8" height="6.6" rx="1.4" fill="url(#mk)" stroke="#6e0c0c" stroke-width="0.7"/><circle cx="5.4" cy="4.9" r="1" fill="#fbe0e0"/></svg>
<div class="t" style="left:319.3px;top:252.94px;font-size:10.8px;line-height:10.8px;color:#1a1a1a;transform:scaleX(0.9151);">24.08.2015 11:02</div>
<div class="t" style="left:453.7px;top:252.94px;font-size:10.8px;line-height:10.8px;color:#1a1a1a;transform:scaleX(0.9314);">Чешется.немн гиперем...</div>
<div class="t" style="left:708.4px;top:252.94px;font-size:10.8px;line-height:10.8px;color:#1a1a1a;transform:scaleX(0.9493);">Дексафорт 500=</div>
<svg class="a" style="left:295.8px;top:268.62px" width="11" height="9" viewBox="0 0 11 9"><rect x="3.8" y="0.2" width="3.2" height="2" rx="0.5" fill="#555"/><rect x="0.6" y="1.7" width="9.6" height="6.4" rx="1.4" fill="#f6f6f6" stroke="#555" stroke-width="0.9"/><circle cx="5.4" cy="4.9" r="1.1" fill="#c43030"/></svg>
<div class="t" style="left:319.3px;top:267.58px;font-size:10.8px;line-height:10.8px;color:#1a1a1a;transform:scaleX(0.9151);">06.09.2015 11:37</div>
<div class="t" style="left:453.7px;top:267.58px;font-size:10.8px;line-height:10.8px;color:#1a1a1a;transform:scaleX(0.9314);">Чешется.немн гиперем...</div>
<div class="t" style="left:708.4px;top:267.58px;font-size:10.8px;line-height:10.8px;color:#1a1a1a;transform:scaleX(0.9409);">обработка фронтлайно...</div>
<svg class="a" style="left:295.8px;top:283.26px" width="11" height="9" viewBox="0 0 11 9"><rect x="3.8" y="0.2" width="3.2" height="2" rx="0.5" fill="#3a2020"/><rect x="0.5" y="1.6" width="9.8" height="6.6" rx="1.4" fill="url(#mk)" stroke="#6e0c0c" stroke-width="0.7"/><circle cx="5.4" cy="4.9" r="1" fill="#fbe0e0"/></svg>
<div class="t" style="left:319.3px;top:282.22px;font-size:10.8px;line-height:10.8px;color:#1a1a1a;transform:scaleX(0.9065);">25.09.2015 18:17</div>
<div class="t" style="left:581.3px;top:282.22px;font-size:10.8px;line-height:10.8px;color:#1a1a1a;transform:scaleX(0.9411);">Гнойный отит</div>
<div class="t" style="left:708.4px;top:282.22px;font-size:10.8px;line-height:10.8px;color:#1a1a1a;transform:scaleX(0.9346);">блокада энрофлокс + д...</div>
<svg class="a" style="left:295.8px;top:297.90000000000003px" width="11" height="9" viewBox="0 0 11 9"><rect x="3.8" y="0.2" width="3.2" height="2" rx="0.5" fill="#3a2020"/><rect x="0.5" y="1.6" width="9.8" height="6.6" rx="1.4" fill="url(#mk)" stroke="#6e0c0c" stroke-width="0.7"/><circle cx="5.4" cy="4.9" r="1" fill="#fbe0e0"/></svg>
<div class="t" style="left:319.3px;top:296.86px;font-size:10.8px;line-height:10.8px;color:#1a1a1a;transform:scaleX(0.9065);">05.12.2015 16:13</div>
<div class="t" style="left:453.7px;top:296.86px;font-size:10.8px;line-height:10.8px;color:#1a1a1a;transform:scaleX(0.9298);">Хромота на лев задн ко...</div>
<div class="t" style="left:708.4px;top:296.86px;font-size:10.8px;line-height:10.8px;color:#1a1a1a;transform:scaleX(0.9331);">Кетофен 0.6 520=</div>
<div class="a" style="left:283px;top:400.2px;width:553px;height:15.8px;border:1px solid #b0b0b0;border-right-color:#c8c8c8;border-bottom-color:#8c8c8c"></div>
<div class="a" style="left:285px;top:405px;width:550px;height:10px;border-top:1px solid #e6e6e6"></div>
<div class="a" style="left:287px;top:401.5px;width:34px;height:6px;background:#fff"></div>
<div class="t s" style="left:289px;top:402.95px;font-size:7.5px;line-height:7.5px;color:#161616;transform:scaleX(0.8822);">Вложения</div>
<div class="a" style="left:2px;top:417px;width:837px;height:30px;background:#f0f0f0"></div>
<div class="a" style="left:3px;top:417.5px;width:835px;height:0.8px;background:#e0e0e0"></div>
<div class="t s" style="left:3.5px;top:422.70px;font-size:7.8px;line-height:7.8px;color:#111;transform:scaleX(0.8989);">Дата создания</div>
<div class="a" style="left:54px;top:420px;width:66px;height:11px;background:#f3f3f3;border:1px solid #dedede"></div>
<div class="t s" style="left:57px;top:422.53px;font-size:8px;line-height:8px;color:#111;transform:scaleX(0.8310);">02.07.2013 13:12:59</div>
<div class="t s" style="left:123.8px;top:422.70px;font-size:7.8px;line-height:7.8px;color:#111;transform:scaleX(0.9258);">Последнее обновление</div>
<div class="a" style="left:206px;top:420px;width:66px;height:11px;background:#f3f3f3;border:1px solid #dedede"></div>
<div class="t s" style="left:209.2px;top:422.53px;font-size:8px;line-height:8px;color:#111;transform:scaleX(0.8283);">02.07.2013 13:12:59</div>
<div class="a" style="left:2px;top:435px;width:837px;height:0.8px;background:#e2e2e2"></div>
<div class="a" style="left:838px;top:2px;width:1px;height:445px;background:#fcfcfc"></div>
<div class="a" style="left:2px;top:446px;width:837px;height:1px;background:#fcfcfc"></div>
<div class="t s" style="left:3px;top:438.15px;font-size:7.5px;line-height:7.5px;color:#111;transform:scaleX(0.8594);">ˈотово</div>
</body></html>
